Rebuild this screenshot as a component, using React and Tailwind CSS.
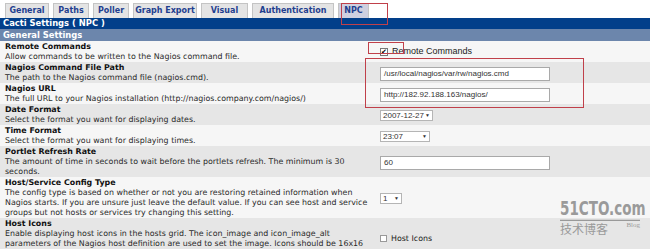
import React from 'react';

const tabs = [
  { name: 'General', w: 'w-[44px]' },
  { name: 'Paths', w: 'w-[36px]' },
  { name: 'Poller', w: 'w-[36px]' },
  { name: 'Graph Export', w: 'w-[64px]' },
  { name: 'Visual', w: 'w-[47px]' },
  { name: 'Authentication', w: 'w-[82px]' },
];

function TextBox({ value }) {
  return (
    <div className="w-[170px] h-[14px] bg-white border border-[#a9a9a9] flex items-center pl-[3px] text-[8px] text-[#333] font-['Liberation_Sans',sans-serif]">
      {value}
    </div>
  );
}

function Dropdown({ value, w }) {
  return (
    <div className={"h-[11px] bg-white border border-[#b5b5b5] flex items-center justify-between px-[2px] text-[8px] text-[#333] font-['Liberation_Sans',sans-serif] " + w}>
      <span>{value}</span>
      <span className="text-[5px]">▼</span>
    </div>
  );
}

function Row({ title, desc, shade, children }) {
  return (
    <div className={"flex " + (shade ? 'bg-[#e6e6e6]' : 'bg-[#f6f6f6]')}>
      <div className="w-[374px] pl-[5px] pr-[4px] pt-[1px] leading-[10px]">
        <div className="font-bold text-[#111]">{title}</div>
        <div className="text-[#2a2a2a]">{desc}</div>
      </div>
      <div className="flex-1 flex items-center pl-[6px] pt-[2px]">{children}</div>
    </div>
  );
}

export default function App() {
  return (
    <div className="w-[650px] h-[249px] overflow-hidden bg-white relative font-['DejaVu_Sans',sans-serif] text-[7.9px]">
      {/* tab strip */}
      <div className="flex items-end h-[18px] pl-[5px] gap-[4px]">
        {tabs.map(t => (
          <div key={t.name} className={"h-[15px] bg-[#e4e4e4] border border-b-0 border-[#c4c4c4] flex items-center justify-center font-bold text-[#1f3f8f] text-[8px] " + t.w}>
            {t.name}
          </div>
        ))}
        <div className="h-[15px] w-[31px] bg-[#cfd0e0] border border-b-0 border-[#c4c4c4] flex items-center justify-center font-bold text-[#1f3f8f] text-[8px]">NPC</div>
      </div>

      <div className="h-[11px] bg-[#023f8a] text-white font-bold pl-[3px] leading-[11px] text-[8.4px]">Cacti Settings ( NPC )</div>
      <div className="h-[12px] bg-[#6c86ac] text-white font-bold pl-[3px] leading-[12px] text-[8.4px]">General Settings</div>

      <Row title="Remote Commands" desc="Allow commands to be written to the Nagios command file.">
        <div className="flex items-center gap-[4px] -mt-[2px]">
          <div className="w-[8px] h-[8px] border border-[#777] bg-white text-[7px] leading-[7px] text-center">✔</div>
          <span className="text-[9px] text-[#222] font-['Liberation_Sans',sans-serif]">Remote Commands</span>
        </div>
      </Row>
      <Row shade title="Nagios Command File Path" desc="The path to the Nagios command file (nagios.cmd).">
        <TextBox value="/usr/local/nagios/var/rw/nagios.cmd" />
      </Row>
      <Row title="Nagios URL" desc="The full URL to your Nagios installation (http://nagios.company.com/nagios/)">
        <TextBox value="http://182.92.188.163/nagios/" />
      </Row>
      <Row shade title="Date Format" desc="Select the format you want for displaying dates.">
        <Dropdown value="2007-12-27" w="w-[53px]" />
      </Row>
      <Row title="Time Format" desc="Select the format you want for displaying times.">
        <Dropdown value="23:07" w="w-[50px]" />
      </Row>
      <Row shade title="Portlet Refresh Rate" desc="The amount of time in seconds to wait before the portlets refresh. The minimum is 30 seconds.">
        <TextBox value="60" />
      </Row>
      <Row title="Host/Service Config Type" desc="The config type is based on whether or not you are restoring retained information when Nagios starts. If you are unsure just leave the default value. If you can see host and service groups but not hosts or services try changing this setting.">
        <Dropdown value="1" w="w-[22px]" />
      </Row>
      <Row shade title="Host Icons" desc="Enable displaying host icons in the hosts grid. The icon_image and icon_image_alt parameters of the Nagios host definition are used to set the image. Icons should be 16x16 to set the host look, this setting does not affect the host status icons.">
        <div className="flex items-center gap-[4px] -mt-[2px]">
          <div className="w-[7px] h-[7px] border border-[#999] bg-white"></div>
          <span className="text-[#222]">Host Icons</span>
        </div>
      </Row>

      {/* red annotation boxes */}
      <div className="absolute left-[341px] top-[3px] w-[47px] h-[22px] border border-[#c0404a]"></div>
      <div className="absolute left-[368px] top-[42px] w-[36px] h-[12px] border border-[#c0404a]"></div>
      <div className="absolute left-[365px] top-[58px] w-[219px] h-[50px] border border-[#c0404a]"></div>

      {/* watermark */}
      <div className="absolute left-[560px] top-[202px] w-[80px] text-[#9a9a9a]">
        <div className="font-['DejaVu_Sans_Condensed',sans-serif] font-bold text-[15px] leading-[18px] scale-y-[1.25] origin-bottom border-b border-[#999]">51CTO.com</div>
        <div className="flex items-center justify-between font-['Noto_Sans_CJK_SC',sans-serif]">
          <span className="text-[12px] leading-[15px]">技术博客</span>
          <span className="text-[7px] font-['Liberation_Serif',serif] -mt-[6px]">Blog</span>
        </div>
      </div>
    </div>
  );
}
